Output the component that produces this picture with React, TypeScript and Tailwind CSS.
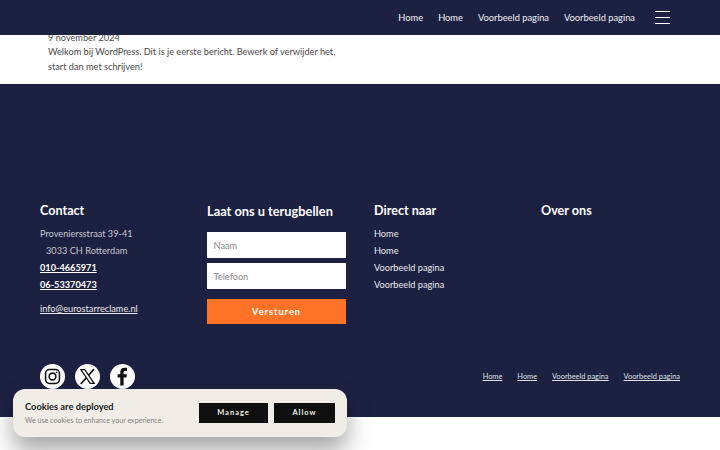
import React from "react";

const F = { fontFamily: '"Lato", "Noto Sans", sans-serif' };

function Insta() {
  return (
    <svg width="17" height="17" viewBox="0 0 24 24" fill="none" stroke="#111" strokeWidth="2.2">
      <rect x="2.2" y="2.2" width="19.6" height="19.6" rx="5.5" />
      <circle cx="12" cy="12" r="4.8" />
      <circle cx="17.8" cy="6.2" r="1.2" fill="#111" stroke="none" />
    </svg>
  );
}
function XLogo() {
  return (
    <svg width="17" height="17" viewBox="0 0 24 24" fill="none" stroke="#111" strokeWidth="1.8" strokeLinejoin="miter">
      <path d="M2.6 2.2h5.6l13.2 19.6h-5.6z" />
      <path d="M21 1.6l-7.8 8.9M10.6 13.6L2.4 22.6" strokeWidth="2.2" />
    </svg>
  );
}
function Fb() {
  return (
    <svg width="19" height="19" viewBox="0 0 24 24" fill="#111">
      <path d="M9.2 23.5V13.4H5.8V9.3h3.4V6.4C9.2 2.9 11.3 1 14.4 1c1.5 0 2.9.1 3.3.2v3.7h-2.3c-1.7 0-2 .8-2 2v2.4h4.2l-.6 4.1h-3.6v10.1z" />
    </svg>
  );
}

const nav = ["Home", "Home", "Voorbeeld pagina", "Voorbeeld pagina"];

export default function App() {
  return (
    <div className="relative w-[720px] h-[450px] overflow-hidden bg-white" style={F}>
      <header className="h-[35px] bg-[#1c2142] flex items-center justify-end relative z-10">
        <nav className="flex gap-[15px] text-[9.3px] text-[#f1f1f4] mr-[20px]">
          {nav.map((n, i) => (
            <span key={i}>{n}</span>
          ))}
        </nav>
        <div className="w-[15px] mr-[50px] flex flex-col gap-[4.5px]">
          <div className="h-[1.5px] bg-white" />
          <div className="h-[1.5px] bg-white" />
          <div className="h-[1.5px] bg-white" />
        </div>
      </header>
      <section className="h-[49px] pl-[48px] text-[#4b4b4b] text-[9.2px] leading-[14.4px] -mt-[4px]">
        <p>9 november 2024</p>
        <p>Welkom bij WordPress. Dit is je eerste bericht. Bewerk of verwijder het,</p>
        <p>start dan met schrijven!</p>
      </section>
      <footer className="h-[333px] bg-[#1c2142] mt-[4px] px-[40px] pt-[118px] text-white">
        <div className="grid grid-cols-[167px_167px_167px_167px]">
          <div>
            <h3 className="text-[12.6px] font-bold leading-[18px] mb-[5px]">Contact</h3>
            <div className="text-[9.2px] leading-[17px] text-[#c4c6d0]">
              <p>Proveniersstraat 39-41</p>
              <p className="pl-[6px]">3033 CH Rotterdam</p>
            </div>
            <div className="text-[9.2px] leading-[17px] font-bold underline">
              <p>010-4665971</p>
              <p>06-53370473</p>
            </div>
            <p className="text-[9.2px] leading-[17px] underline mt-[7px] text-[#e8e9ee]">info@eurostarreclame.nl</p>
          </div>
          <div>
            <h3 className="text-[12.8px] font-bold leading-[18px] mb-[12px]">Laat ons u terugbellen</h3>
            <div className="w-[139px] flex flex-col">
              <input
                readOnly
                placeholder="Naam"
                className="h-[26px] bg-white px-[6.5px] text-[9.2px] text-black placeholder:text-[#8a8a8a] outline-none"
              />
              <input
                readOnly
                placeholder="Telefoon"
                className="h-[26px] mt-[5px] bg-white px-[6.5px] text-[9.2px] text-black placeholder:text-[#8a8a8a] outline-none"
              />
              <button className="h-[25px] mt-[10px] bg-[#ff7327] text-white text-[9.2px] font-bold tracking-[1px]">
                Versturen
              </button>
            </div>
          </div>
          <div>
            <h3 className="text-[12.6px] font-bold leading-[18px] mb-[5px]">Direct naar</h3>
            <div className="text-[9.2px] leading-[17px] text-[#e8e9ee]">
              {nav.map((n, i) => (
                <p key={i}>{n}</p>
              ))}
            </div>
          </div>
          <div>
            <h3 className="text-[12.6px] font-bold leading-[18px]">Over ons</h3>
          </div>
        </div>
        <div className="flex items-center justify-between mt-[40px]">
          <div className="flex gap-[10px]">
            <div className="w-[25px] h-[25px] rounded-full bg-white flex items-center justify-center"><Insta /></div>
            <div className="w-[25px] h-[25px] rounded-full bg-white flex items-center justify-center"><XLogo /></div>
            <div className="w-[25px] h-[25px] rounded-full bg-white flex items-center justify-center"><Fb /></div>
          </div>
          <div className="flex gap-[15px] text-[7.4px] underline text-[#dfe0e6]">
            {nav.map((n, i) => (
              <span key={i}>{n}</span>
            ))}
          </div>
        </div>
      </footer>
      <div className="absolute left-[12.5px] top-[389px] w-[334.5px] h-[48px] rounded-[12px] bg-[#f0ede6] shadow-[0_14px_24px_rgba(0,0,0,0.35)] flex items-center justify-between pl-[12.5px] pr-[12px] z-20">
        <div>
          <p className="text-[9.3px] font-bold text-[#222] leading-[14px]">Cookies are deployed</p>
          <p className="text-[7.1px] text-[#85837f] leading-[11px] mt-[1px]">We use cookies to enhance your experience.</p>
        </div>
        <div className="flex gap-[6px]">
          <button className="w-[69px] h-[20px] bg-[#0f0f0f] text-[#f0ede6] text-[7.5px] font-bold tracking-[1px]">Manage</button>
          <button className="w-[61px] h-[20px] bg-[#0f0f0f] text-[#f0ede6] text-[7.5px] font-bold tracking-[1px]">Allow</button>
        </div>
      </div>
    </div>
  );
}
